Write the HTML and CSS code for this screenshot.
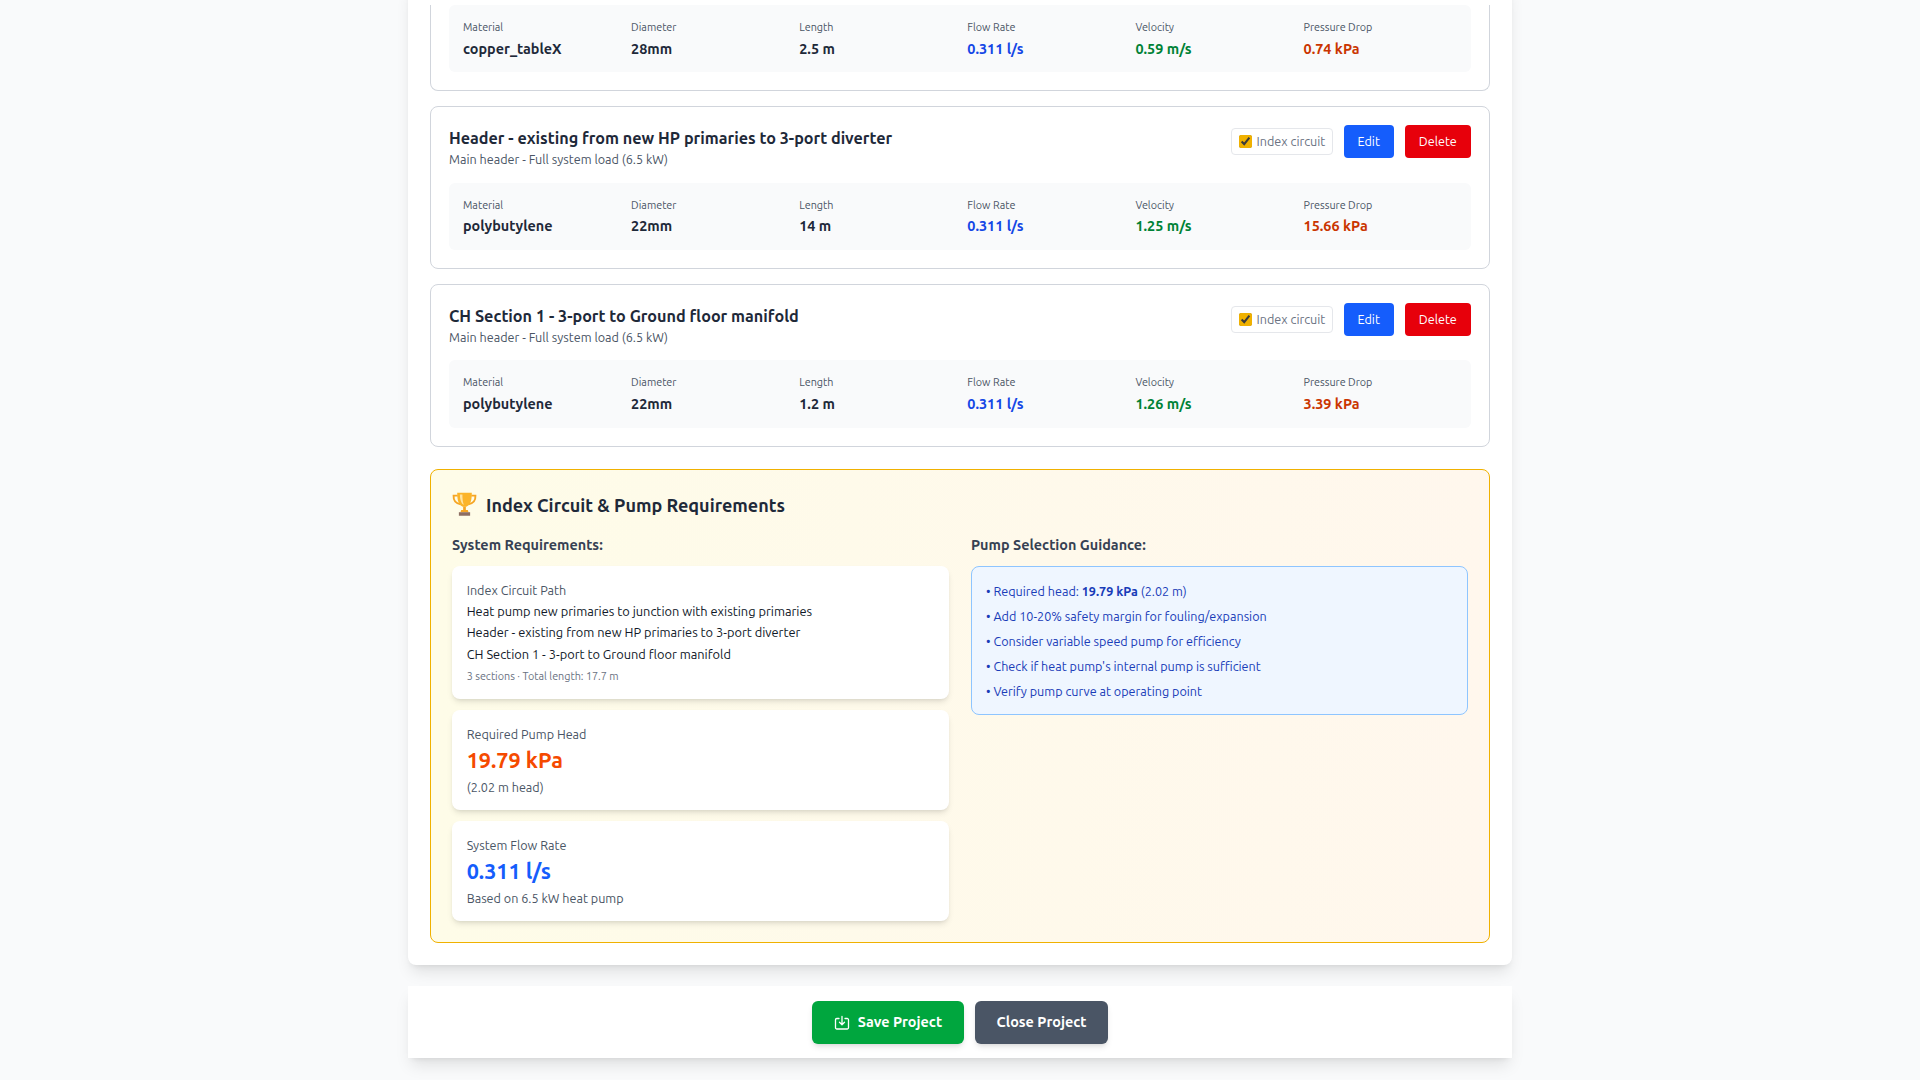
FILE: index.html
```html
<!DOCTYPE html>
<html lang="en">
<head>
<meta charset="utf-8">
<title>Pump Requirements</title>
<link rel="stylesheet" href="styles.css">
</head>
<body>
<div class="page">
  <main class="main-card">
    <section class="pipe-card pipe-card-clipped">
      <div class="data-panel">
        <div><div class="data-label">Material</div><div class="data-value">copper_tableX</div></div>
        <div><div class="data-label">Diameter</div><div class="data-value">28mm</div></div>
        <div><div class="data-label">Length</div><div class="data-value">2.5 m</div></div>
        <div><div class="data-label">Flow Rate</div><div class="data-value is-blue">0.311 l/s</div></div>
        <div><div class="data-label">Velocity</div><div class="data-value is-green">0.59 m/s</div></div>
        <div><div class="data-label">Pressure Drop</div><div class="data-value is-red">0.74 kPa</div></div>
      </div>
    </section>

    <section class="pipe-card">
      <header class="pipe-head">
        <div>
          <h3 class="pipe-title">Header - existing from new HP primaries to 3-port diverter</h3>
          <p class="pipe-sub">Main header - Full system load (6.5 kW)</p>
        </div>
        <div class="pipe-actions">
          <label class="index-toggle"><input type="checkbox" checked>Index circuit</label>
          <button class="btn btn-edit">Edit</button>
          <button class="btn btn-delete">Delete</button>
        </div>
      </header>
      <div class="data-panel">
        <div><div class="data-label">Material</div><div class="data-value">polybutylene</div></div>
        <div><div class="data-label">Diameter</div><div class="data-value">22mm</div></div>
        <div><div class="data-label">Length</div><div class="data-value">14 m</div></div>
        <div><div class="data-label">Flow Rate</div><div class="data-value is-blue">0.311 l/s</div></div>
        <div><div class="data-label">Velocity</div><div class="data-value is-green">1.25 m/s</div></div>
        <div><div class="data-label">Pressure Drop</div><div class="data-value is-red">15.66 kPa</div></div>
      </div>
    </section>

    <section class="pipe-card">
      <header class="pipe-head">
        <div>
          <h3 class="pipe-title">CH Section 1 - 3-port to Ground floor manifold</h3>
          <p class="pipe-sub">Main header - Full system load (6.5 kW)</p>
        </div>
        <div class="pipe-actions">
          <label class="index-toggle"><input type="checkbox" checked>Index circuit</label>
          <button class="btn btn-edit">Edit</button>
          <button class="btn btn-delete">Delete</button>
        </div>
      </header>
      <div class="data-panel">
        <div><div class="data-label">Material</div><div class="data-value">polybutylene</div></div>
        <div><div class="data-label">Diameter</div><div class="data-value">22mm</div></div>
        <div><div class="data-label">Length</div><div class="data-value">1.2 m</div></div>
        <div><div class="data-label">Flow Rate</div><div class="data-value is-blue">0.311 l/s</div></div>
        <div><div class="data-label">Velocity</div><div class="data-value is-green">1.26 m/s</div></div>
        <div><div class="data-label">Pressure Drop</div><div class="data-value is-red">3.39 kPa</div></div>
      </div>
    </section>

    <section class="index-panel">
      <h2 class="index-title">
        <svg class="trophy" viewBox="0 0 24 24" aria-hidden="true">
          <path d="M5.500 3.500H1.500c-.2 4 1.800 7.500 6.800 8.300" fill="none" stroke="#f5a524" stroke-width="1.800"/>
          <path d="M18.500 3.500h4c.2 4-1.800 7.500-6.800 8.300" fill="none" stroke="#f5a524" stroke-width="1.800"/>
          <path d="M5 .8h14c0 5.500-.6 11.500-5.300 13.400h-3.400C5.600 12.300 5 6.300 5 .8z" fill="#fbb429"/>
          <path d="M7.600 2.300H10c0 3.900.3 7.200 1.400 10C8.700 11.200 7.600 6.700 7.600 2.300z" fill="#ffe3a0"/>
          <path d="M10.700 14h2.600v3.600h-2.600z" fill="#f5a524"/>
          <path d="M8.800 17.400h6.400l.6 2H8.200z" fill="#f5a524"/>
          <path d="M6.600 19.400h10.800v3.400H6.600z" fill="#8d6e63"/>
        </svg>
        Index Circuit &amp; Pump Requirements
      </h2>
      <div class="index-cols">
        <div>
          <h4 class="col-title">System Requirements:</h4>
          <div class="stat-stack">
            <div class="stat-card">
              <div class="stat-label">Index Circuit Path</div>
              <div class="path-list">
                <div>Heat pump new primaries to junction with existing primaries</div>
                <div>Header - existing from new HP primaries to 3-port diverter</div>
                <div>CH Section 1 - 3-port to Ground floor manifold</div>
              </div>
              <div class="path-meta">3 sections · Total length: 17.7 m</div>
            </div>
            <div class="stat-card">
              <div class="stat-label">Required Pump Head</div>
              <div class="stat-value is-orange">19.79 kPa</div>
              <div class="stat-label">(2.02 m head)</div>
            </div>
            <div class="stat-card">
              <div class="stat-label">System Flow Rate</div>
              <div class="stat-value is-blue">0.311 l/s</div>
              <div class="stat-label">Based on 6.5 kW heat pump</div>
            </div>
          </div>
        </div>
        <div>
          <h4 class="col-title">Pump Selection Guidance:</h4>
          <ul class="guide-box">
            <li>• Required head: <strong>19.79 kPa</strong> (2.02 m)</li>
            <li>• Add 10-20% safety margin for fouling/expansion</li>
            <li>• Consider variable speed pump for efficiency</li>
            <li>• Check if heat pump's internal pump is sufficient</li>
            <li>• Verify pump curve at operating point</li>
          </ul>
        </div>
      </div>
    </section>
  </main>

  <footer class="action-bar">
    <button class="action-btn action-save">
      <svg class="save-icon" viewBox="0 0 16 16" fill="none" stroke="currentColor" stroke-width="1.300" stroke-linecap="round" stroke-linejoin="round" aria-hidden="true">
        <path d="M5 3.500H2.800A1.300 1.300 0 0 0 1.500 4.800v7.900A1.300 1.300 0 0 0 2.800 14h10.400a1.300 1.300 0 0 0 1.300-1.300V4.800a1.300 1.300 0 0 0-1.300-1.300H11"/>
        <path d="M8 1.500v8M5.500 7.300 8 9.800l2.500-2.500"/>
      </svg>
      Save Project
    </button>
    <button class="action-btn action-close">Close Project</button>
  </footer>
</div>
</body>
</html>
```
FILE: styles.css
```css
* { box-sizing: border-box; }

html { font-size: 14.4px; }

body {
  margin: 0;
  background: #f9fafb;
  color: #1e2939;
  font-family: Ubuntu, "Noto Sans", "Open Sans", sans-serif;
  line-height: 1.5;
}

h2, h3, h4, p, ul { margin: 0; padding: 0; }

.page {
  height: 100vh;
  overflow: hidden;
  display: flex;
  flex-direction: column;
  justify-content: flex-end;
  align-items: center;
  gap: 21px;
  padding-bottom: 22px;
}

.main-card,
.action-bar {
  flex: none;
  width: 1104px;
  background: #fff;
  box-shadow: 0 10px 15px -3px rgba(0,0,0,.1), 0 4px 6px -4px rgba(0,0,0,.1);
}

.main-card {
  padding: 22px;
  border-radius: 0 0 8px 8px;
}

.pipe-card {
  border: 1px solid #d1d5dc;
  border-radius: 8px;
  padding: 18px;
}

.pipe-card-clipped {
  padding-top: 0;
  border-top: 0;
  border-radius: 0 0 8px 8px;
}

.pipe-card + .pipe-card { margin-top: 14.7px; }

.pipe-head {
  display: flex;
  justify-content: space-between;
  align-items: flex-start;
  margin-bottom: 14.7px;
}

.pipe-title {
  font-size: 1.125rem;
  font-weight: 600;
  line-height: 26px;
  color: #1e2939;
}

.pipe-sub {
  font-size: .875rem;
  line-height: 17px;
  color: #4a5565;
}

.pipe-actions {
  display: flex;
  align-items: center;
  gap: 11px;
}

.index-toggle {
  display: flex;
  align-items: center;
  gap: 5px;
  height: 27px;
  padding: 0 6.5px 0 7px;
  border: 1px solid #e5e7eb;
  border-radius: 4px;
  font-size: .875rem;
  color: #6a7282;
}

.index-toggle input {
  width: 13px;
  height: 13px;
  margin: 0;
  accent-color: #f0b100;
}

.btn {
  height: 33px;
  padding: 0 13.75px;
  border: 0;
  border-radius: 4px;
  font: inherit;
  font-size: .875rem;
  color: #fff;
}

.btn-edit { background: #155dfc; }
.btn-delete { background: #e7000b; padding: 0 14.2px; }

.data-panel {
  display: grid;
  grid-template-columns: repeat(6, 1fr);
  gap: 14.7px;
  padding: 13.9px 14px 12.9px;
  background: #f9fafb;
  border-radius: 6px;
}

.data-label {
  font-size: .75rem;
  line-height: 16.5px;
  color: #4a5565;
  margin-bottom: 2px;
}

.data-value {
  font-size: 1rem;
  line-height: 22px;
  font-weight: 600;
  color: #1e2939;
}

.is-blue { color: #155dfc; }
.is-green { color: #00a63e; }
.is-red { color: #e7000b; }
.is-orange { color: #f54a00; }

.data-value.is-blue { color: #1447e6; }
.data-value.is-green { color: #008236; }
.data-value.is-red { color: #ca3500; }

.index-panel {
  margin-top: 22px;
  padding: 21px;
  border: 1px solid #f0b100;
  border-radius: 8px;
  background: linear-gradient(to right, #fefce8, #fff7ed);
}

.index-title {
  display: flex;
  align-items: center;
  gap: 9px;
  font-size: 1.25rem;
  font-weight: 600;
  line-height: 28px;
  color: #1e2939;
  margin-bottom: 15px;
}

.trophy { width: 25px; height: 25px; flex: none; }

.index-cols {
  display: grid;
  grid-template-columns: 1fr 1fr;
  gap: 22px;
}

.col-title {
  font-size: 1rem;
  font-weight: 600;
  line-height: 22px;
  color: #364153;
  margin-bottom: 10.4px;
}

.stat-stack {
  display: flex;
  flex-direction: column;
  gap: 11px;
}

.stat-card {
  padding: 14.9px 14.7px 14.1px;
  background: #fff;
  border-radius: 8px;
  box-shadow: 0 4px 6px -1px rgba(0,0,0,.1), 0 2px 4px -2px rgba(0,0,0,.1);
}

.stat-label {
  font-size: .875rem;
  line-height: 18.4px;
  color: #4a5565;
}

.stat-value {
  font-size: 1.5rem;
  font-weight: 700;
  line-height: 30px;
  margin: 2px 0 2.5px;
}

.path-list {
  margin-top: 1.5px;
  font-size: 12.8px;
  line-height: 21.4px;
  color: #101828;
}

.path-meta {
  margin-top: 3px;
  font-size: .75rem;
  line-height: 16.5px;
  color: #6a7282;
}

.guide-box {
  list-style: none;
  display: flex;
  flex-direction: column;
  gap: 6.6px;
  padding: 14.7px 14px 13.5px;
  border: 1px solid #8ec5ff;
  border-radius: 8px;
  background: #eff6ff;
  font-size: .875rem;
  line-height: 18.4px;
  color: #193cb8;
}

.action-bar {
  display: flex;
  justify-content: center;
  gap: 11px;
  padding: 14.5px 14.7px;
}

.action-btn {
  display: flex;
  align-items: center;
  gap: 8px;
  height: 42.7px;
  padding: 1px 22px 0;
  border: 0;
  border-radius: 6px;
  font: inherit;
  font-size: 1rem;
  font-weight: 600;
  color: #fff;
  box-shadow: 0 4px 6px -1px rgba(0,0,0,.1), 0 2px 4px -2px rgba(0,0,0,.1);
}

.action-save { background: #00a63e; padding-left: 22.7px; padding-right: 21.5px; gap: 7.5px; }
.action-close { background: #4a5565; }

.save-icon { width: 16px; height: 16px; flex: none; }
```
